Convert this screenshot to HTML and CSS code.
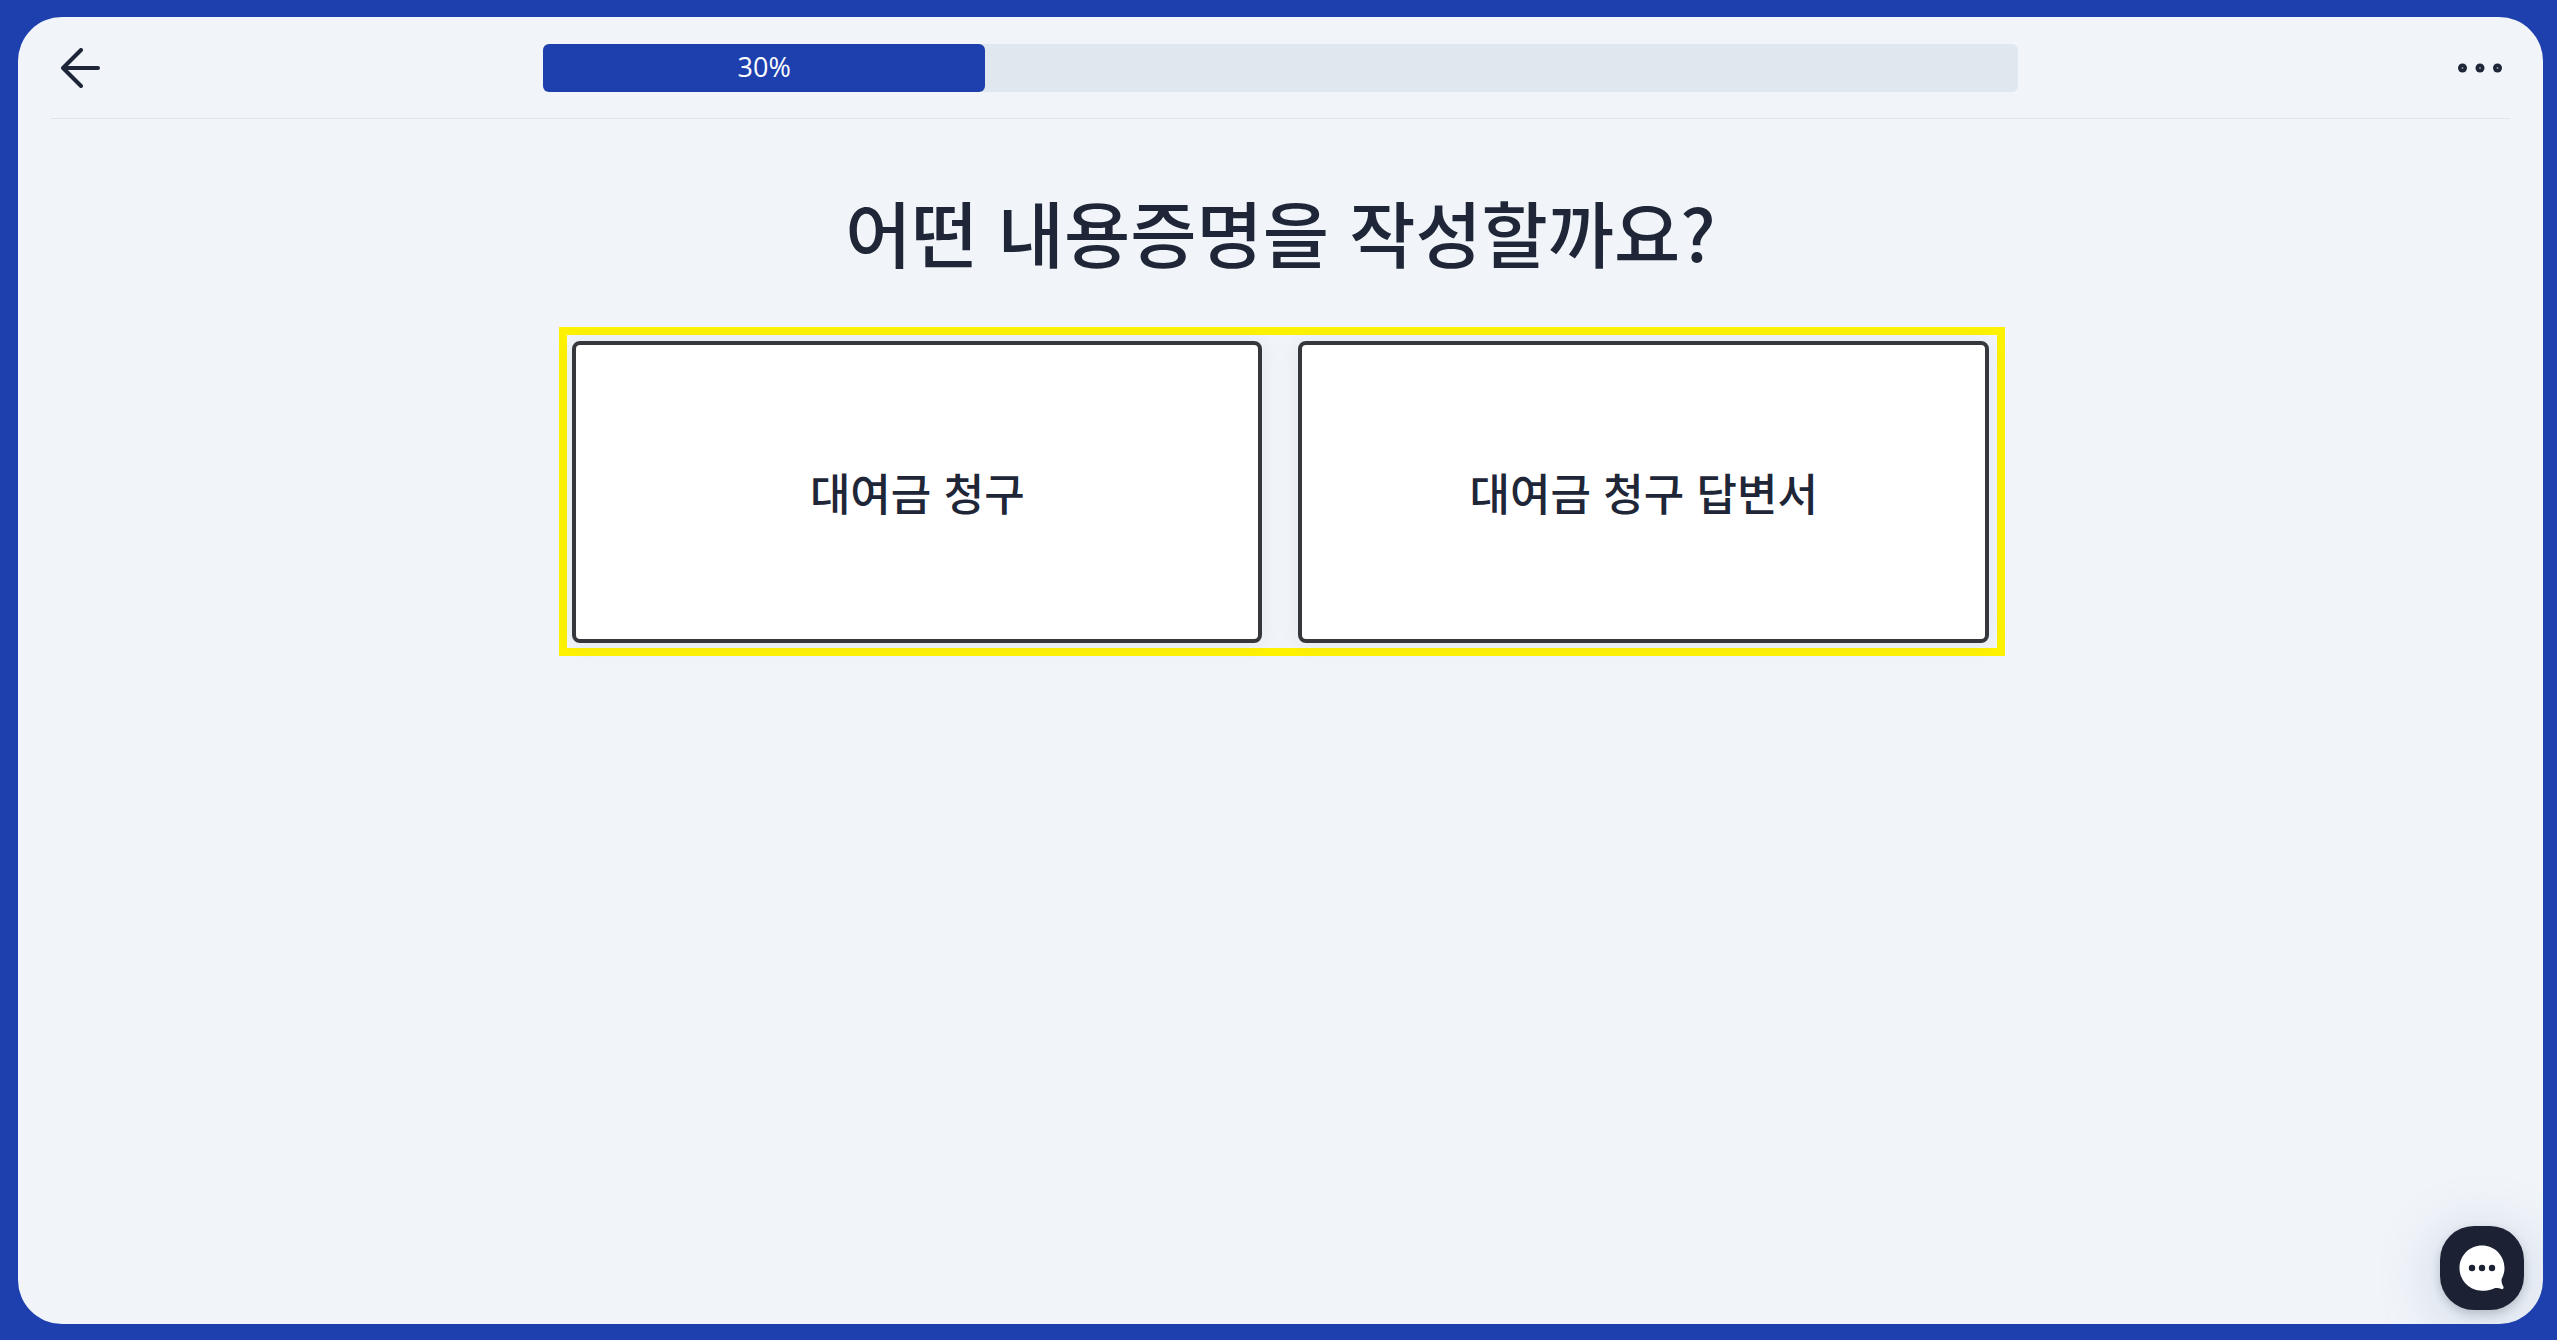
FILE: index.html
```html
<!DOCTYPE html>
<html lang="ko">
<head>
<meta charset="utf-8">
<meta name="viewport" content="width=device-width, initial-scale=1">
<title>내용증명 작성</title>
<link rel="stylesheet" href="styles.css">
</head>
<body class="page">
<div class="panel">
  <header class="topbar">
    <button class="icon-button" type="button" aria-label="뒤로">
      <svg width="40" height="40" viewBox="0 0 40 40" fill="none" stroke="currentColor" stroke-width="4" stroke-linecap="round" stroke-linejoin="round"><path d="M37 20H2M20 2L2 20l18 18"/></svg>
    </button>
    <div class="progress" role="progressbar" aria-label="진행률" aria-valuemin="0" aria-valuemax="100" aria-valuenow="30">
      <div class="progress-fill" style="width: 30%">30%</div>
    </div>
    <button class="icon-button icon-button-end" type="button" aria-label="더보기">
      <svg width="44" height="40" viewBox="0 0 44 40" fill="currentColor"><circle cx="4.500" cy="20" r="4.500"/><circle cx="22" cy="20" r="4.500"/><circle cx="39.500" cy="20" r="4.500"/><g fill="#8b909b"><circle cx="4.500" cy="20" r="1"/><circle cx="22" cy="20" r="1"/><circle cx="39.500" cy="20" r="1"/></g></svg>
    </button>
  </header>
  <main class="content">
    <h1 class="title">어떤 내용증명을 작성할까요?</h1>
    <div class="choices">
      <button class="choice" type="button">대여금 청구</button>
      <button class="choice" type="button">대여금 청구 답변서</button>
    </div>
  </main>
  <button class="chat" type="button" aria-label="채팅 상담">
    <svg width="46" height="46" viewBox="0 0 46 46"><path fill="#fff" d="M23 0.500C35.500 0.500 45.500 10.500 45.500 23c0 4-1 7.500-2.800 10.800-.5 3 .3 5.500 1.800 8.200.3 1-.2 2.200-1.200 2.200-3-.8-5.800-1.600-8.300-.8-3.500 1.500-7.500 2.300-12 2.300C10.500 45.500.500 35.500.500 23S10.500.500 23 .500z"/><g fill="#1c2233"><circle cx="13" cy="23" r="3.200"/><circle cx="23" cy="23" r="3.200"/><circle cx="33" cy="23" r="3.200"/></g></svg>
  </button>
</div>
</body>
</html>
```
FILE: styles.css
```css
*, *::before, *::after {
  box-sizing: border-box;
}

.page {
  margin: 0;
  min-height: 100vh;
  display: flex;
  padding: 17px 14px 16px 18px;
  background: #1e3fae;
  color: #1e2637;
  font-family: "Noto Sans CJK KR", sans-serif;
}

.panel {
  position: relative;
  flex: 1;
  overflow: hidden;
  padding: 0 33px;
  border-radius: 44px;
  background: #f1f5fa;
}

button {
  border: 0;
  padding: 0;
  background: none;
  color: inherit;
  font: inherit;
  cursor: pointer;
}

.topbar {
  display: grid;
  grid-template-columns: 1fr 60% 1fr;
  align-items: center;
  padding: 27px 0 26px;
  border-bottom: 1px solid #dfe5ed;
}

.icon-button {
  display: flex;
  justify-self: start;
  padding: 0 10px;
}

.icon-button-end {
  justify-self: end;
  padding: 0 8px;
}

.progress {
  height: 48px;
  border-radius: 6px;
  background: #e0e7ef;
}

.progress-fill {
  height: 100%;
  border-radius: 6px;
  background: #1e3fae;
  color: #fff;
  font-family: "Open Sans", sans-serif;
  font-size: 27px;
  line-height: 46px;
  text-align: center;
}

.content {
  display: flex;
  flex-direction: column;
  align-items: center;
}

.title {
  margin: 58px 0 42px;
  font-size: 72px;
  font-weight: 500;
  line-height: 108px;
  text-align: center;
}

.choices {
  display: grid;
  grid-template-columns: 1fr 1fr;
  gap: 36px;
  width: 58.8%;
  margin-left: 3px;
  padding: 6px 8px 5px 5px;
  border: 8px solid #fff200;
}

.choice {
  min-height: 302px;
  border: 4px solid #35373c;
  border-radius: 8px;
  background: #fff;
  box-shadow: 0 2px 20px rgba(148, 163, 184, 0.16);
  font-size: 44px;
  font-weight: 500;
  line-height: 64px;
}

.chat {
  position: absolute;
  right: 19px;
  bottom: 14px;
  display: grid;
  place-items: center;
  width: 84px;
  height: 84px;
  border-radius: 34px;
  background: #1c2233;
  box-shadow: 0 4px 10px rgba(28, 34, 51, 0.2), 0 10px 50px 14px rgba(120, 145, 180, 0.2);
}
```
